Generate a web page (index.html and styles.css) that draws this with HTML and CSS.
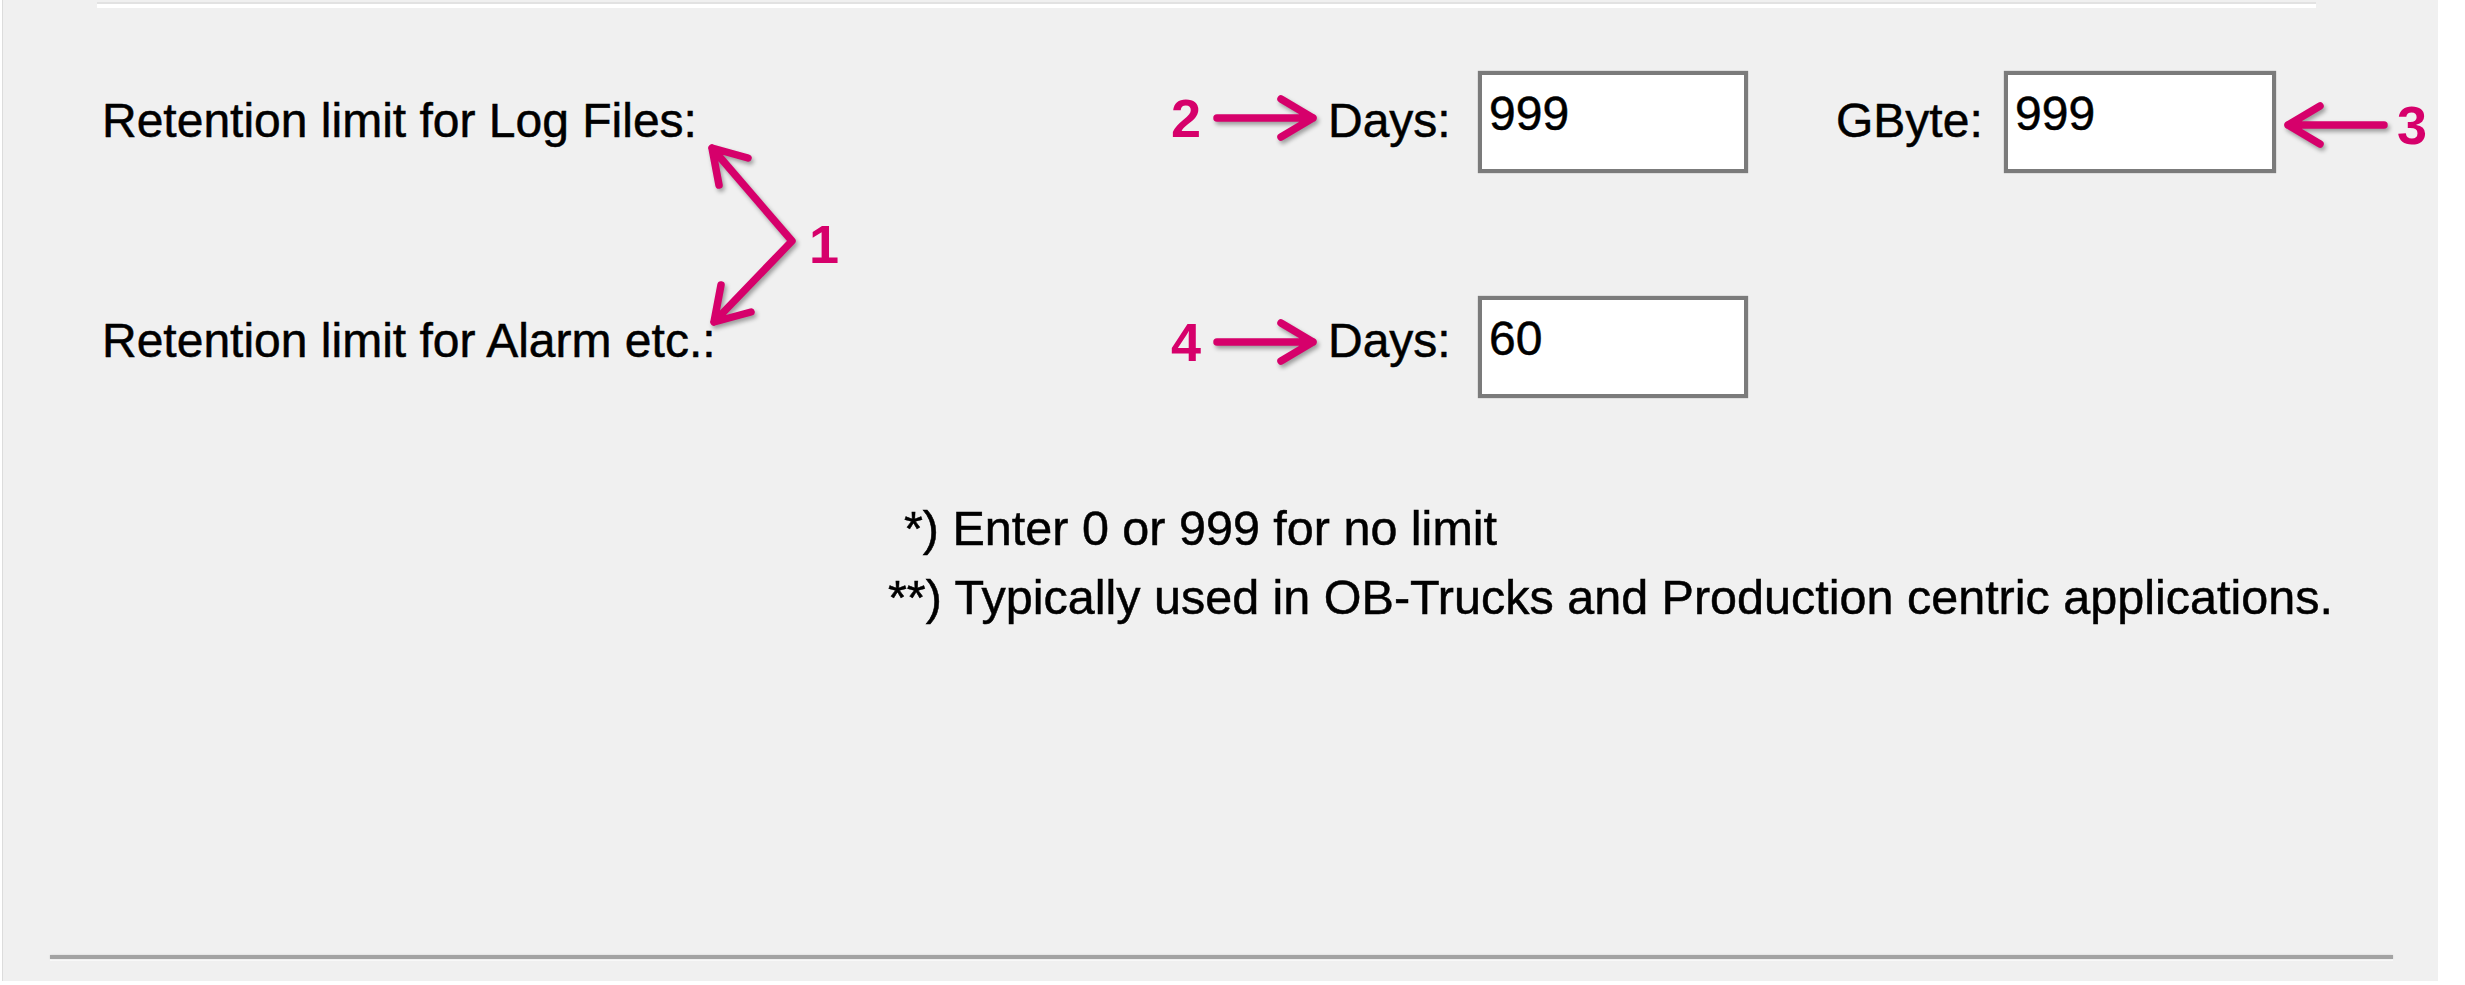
FILE: index.html
```html
<!DOCTYPE html>
<html lang="en">
<head>
<meta charset="utf-8">
<title>Retention limits</title>
<link rel="stylesheet" href="styles.css">
</head>
<body>
<div class="panel">
  <div class="edge-top"></div>

  <div class="row row-log">
    <div class="label">Retention limit for Log Files:</div>
    <div class="callout">
      <span class="num">2</span>
      <svg class="arrow" width="110" height="50" viewBox="0 0 110 50"><path d="M4 25 H100 M100 25 L68 6 M100 25 L68 44"/></svg>
    </div>
    <div class="unit">Days:</div>
    <div class="field">999</div>
    <div class="unit unit-gb">GByte:</div>
    <div class="field">999</div>
    <div class="callout callout-right">
      <svg class="arrow" width="110" height="50" viewBox="0 0 110 50"><path d="M6 25 H102 M6 25 L38 6 M6 25 L38 44"/></svg>
      <span class="num">3</span>
    </div>
  </div>

  <div class="row row-alarm">
    <div class="label">Retention limit for Alarm etc.:</div>
    <div class="callout">
      <span class="num">4</span>
      <svg class="arrow" width="110" height="50" viewBox="0 0 110 50"><path d="M4 25 H100 M100 25 L68 6 M100 25 L68 44"/></svg>
    </div>
    <div class="unit">Days:</div>
    <div class="field">60</div>
  </div>

  <div class="notes">
    <p class="note note-first">*) Enter 0 or 999 for no limit</p>
    <p class="note">**) Typically used in OB-Trucks and Production centric applications.</p>
  </div>

  <div class="separator"></div>

  <svg class="overlay" width="2436" height="981" viewBox="3 0 2436 981">
    <path class="anno-line" d="M712 148 L792 241 L714 322 M748 158 L712 148 L719 185 M751 312 L714 322 L721 285"/>
    <text class="anno-num" x="809" y="263">1</text>
  </svg>
</div>
</body>
</html>
```

FILE: styles.css
```css
* {
  box-sizing: border-box;
}

html,
body {
  margin: 0;
  padding: 0;
  background: #ffffff;
}

body {
  width: 2465px;
  height: 985px;
  overflow: hidden;
  font-family: "Liberation Sans", Arial, sans-serif;
  color: #000000;
}

.panel {
  position: relative;
  margin-left: 2px;
  width: 2436px;
  height: 981px;
  background: #f0f0f0;
  border-left: 1px solid #dcdcdc;
  display: flex;
  flex-direction: column;
}

.edge-top {
  margin: 2px 0 0 94px;
  width: 2219px;
  height: 6px;
  border-top: 2px solid #e2e2e2;
  background: #ffffff;
}

.row {
  --text-top: 26px;
  --callout-top: 22px;
  margin-left: 99px;
  height: 102px;
  display: grid;
  grid-template-columns: 1069px 157px 150px 270px 256px 272px auto;
  align-items: start;
  font-size: 48px;
  line-height: 48px;
}

.row-log {
  margin-top: 63px;
}

.row-alarm {
  --text-top: 21px;
  --callout-top: 21px;
  margin-top: 123px;
}

.label,
.unit,
.field,
.note {
  -webkit-text-stroke: 0.5px #000000;
}

.label,
.unit {
  white-space: nowrap;
  padding-top: var(--text-top);
}

.unit-gb {
  padding-left: 88px;
}

.callout {
  display: flex;
  align-items: center;
  height: 50px;
  margin-top: var(--callout-top);
}

.callout-right {
  --callout-top: 29px;
  padding-left: 6px;
}

.num {
  font-weight: bold;
  font-size: 54px;
  line-height: 54px;
  color: #d6006b;
}

.arrow {
  margin-left: 12px;
  overflow: visible;
  filter: drop-shadow(2px 3px 2px rgba(0, 0, 0, 0.35));
}

.callout-right .arrow {
  margin-left: 0;
  margin-right: 5px;
}

.arrow path {
  fill: none;
  stroke: #d6006b;
  stroke-width: 7.5;
  stroke-linecap: round;
  stroke-linejoin: round;
}

.field {
  height: 102px;
  background: #ffffff;
  border: 4px solid #7b7b7b;
  box-shadow: 0 0 1px #8a8a8a;
  padding: 15px 0 0 7px;
  line-height: 48px;
}

.notes {
  margin: 96px 0 0 885px;
  font-size: 48.5px;
  line-height: 69px;
}

.note {
  margin: 0;
  white-space: nowrap;
}

.note-first {
  padding-left: 16px;
}

.separator {
  margin: auto 45px 22px 47px;
  height: 4px;
  background: #a3a3a3;
  box-shadow: 0 0 2px rgba(0, 0, 0, 0.15), 0 2px 0 #fafafa;
}

.overlay {
  position: absolute;
  left: 0;
  top: 0;
  pointer-events: none;
  overflow: visible;
}

.anno-line {
  fill: none;
  stroke: #d6006b;
  stroke-width: 7.5;
  stroke-linecap: round;
  stroke-linejoin: round;
  filter: drop-shadow(2px 3px 2px rgba(0, 0, 0, 0.35));
}

.anno-num {
  font-family: "Liberation Sans", Arial, sans-serif;
  font-weight: bold;
  font-size: 54px;
  fill: #d6006b;
}
```
